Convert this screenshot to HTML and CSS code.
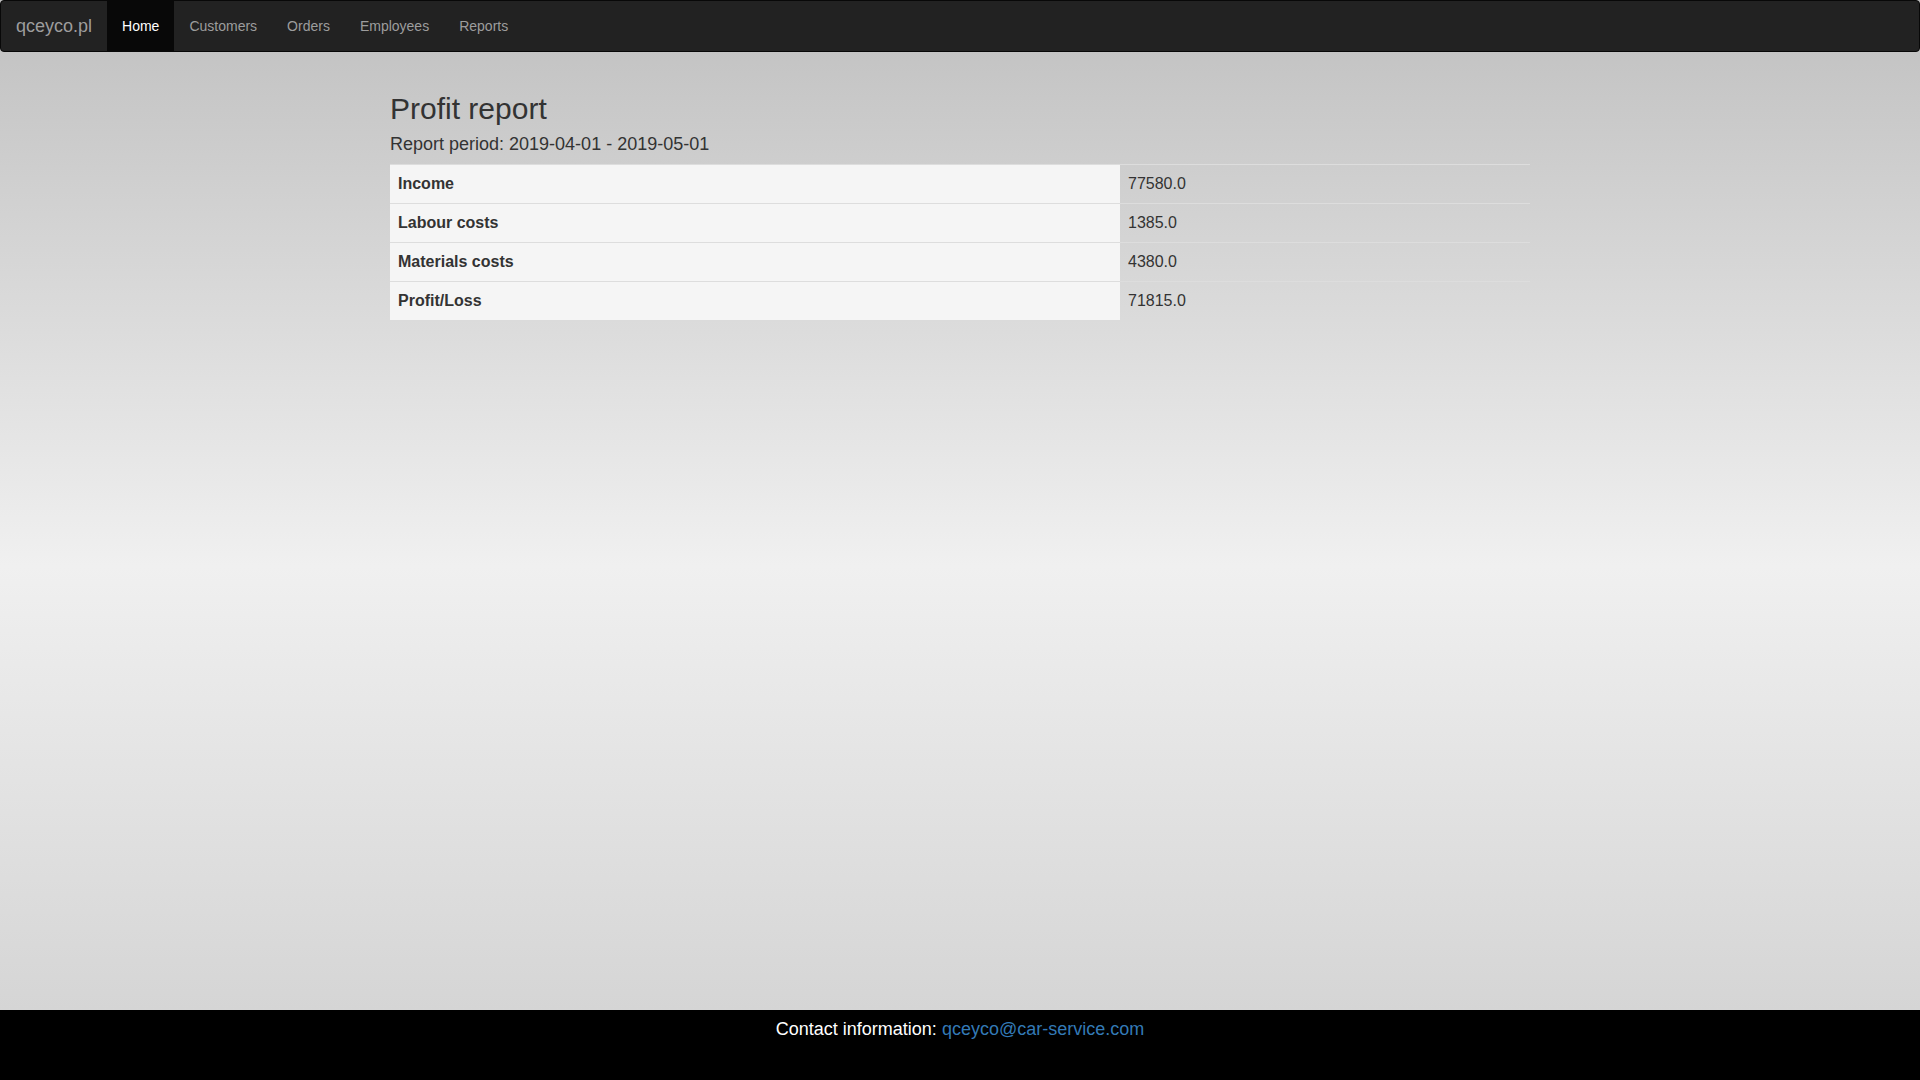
FILE: index.html
```html
<!DOCTYPE html>
<html lang="en">
<head>
<meta charset="utf-8">
<title>Profit report</title>
<link rel="stylesheet" href="styles.css">
</head>
<body>
<div class="page">
  <div class="main">
    <nav class="navbar">
      <a class="brand" href="#">qceyco.pl</a>
      <ul class="nav">
        <li class="active"><a href="#">Home</a></li>
        <li><a href="#">Customers</a></li>
        <li><a href="#">Orders</a></li>
        <li><a href="#">Employees</a></li>
        <li><a href="#">Reports</a></li>
      </ul>
    </nav>
    <div class="container">
      <h2 class="title">Profit report</h2>
      <h4 class="period">Report period: 2019-04-01 - 2019-05-01</h4>
      <table class="report">
        <tbody>
          <tr><th>Income</th><td>77580.0</td></tr>
          <tr><th>Labour costs</th><td>1385.0</td></tr>
          <tr><th>Materials costs</th><td>4380.0</td></tr>
          <tr><th>Profit/Loss</th><td>71815.0</td></tr>
        </tbody>
      </table>
    </div>
  </div>
  <footer class="footer">
    Contact information: <a href="#">qceyco@car-service.com</a>
  </footer>
</div>
</body>
</html>
```
FILE: styles.css
```css
* { box-sizing: border-box; }
html, body { margin: 0; padding: 0; }
body {
  font-family: "Liberation Sans", Arial, sans-serif;
  font-size: 14px;
  line-height: 1.42857;
  color: #333;
}
.page {
  display: flex;
  flex-direction: column;
  min-height: 100vh;
}
.main {
  flex: 1;
  background: linear-gradient(to bottom, #c1c1c1 0%, #c4c4c4 5%, #f0f0f0 56%, #d5d5d5 100%);
}
.navbar {
  display: flex;
  align-items: stretch;
  height: 52px;
  background: #222;
  border: 1px solid #080808;
  border-radius: 4px;
  margin-bottom: 20px;
}
.brand {
  display: block;
  padding: 15px;
  font-size: 18px;
  line-height: 20px;
  height: 50px;
  color: #9d9d9d;
  text-decoration: none;
}
.nav {
  display: flex;
  list-style: none;
  margin: 0;
  padding: 0;
}
.nav li a {
  display: block;
  padding: 15px;
  line-height: 20px;
  font-size: 14px;
  color: #9d9d9d;
  text-decoration: none;
}
.nav li.active a {
  background: #080808;
  color: #fff;
}
.container {
  width: 1170px;
  margin: 0 auto;
  padding: 20px 15px 0;
}
.title {
  font-size: 30px;
  font-weight: 500;
  line-height: 1.1;
  margin: 0 0 10px;
  color: #333;
}
.period {
  font-size: 18px;
  font-weight: 500;
  line-height: 1.1;
  margin: 10px 0 9px;
  color: #333;
}
.report {
  width: 100%;
  border-collapse: collapse;
  border-spacing: 0;
  margin-bottom: 20px;
  font-size: 16px;
}
.report th, .report td {
  padding: 8px;
  line-height: 22px;
  text-align: left;
  vertical-align: top;
  border-top: 1px solid #ddd;
}
.report th {
  width: 730px;
  font-weight: bold;
  background: #f5f5f5;
}
.report td {
  font-weight: normal;
}
.footer {
  height: 70px;
  background: #000;
  color: #fff;
  text-align: center;
  font-size: 18px;
  line-height: 20px;
  padding-top: 9px;
}
.footer a {
  color: #337ab7;
  text-decoration: none;
}
```
